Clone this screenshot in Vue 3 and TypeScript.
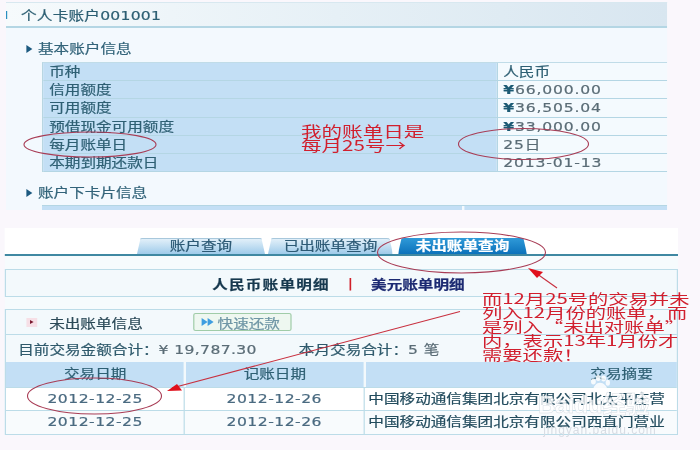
<script setup lang="ts">
interface InfoRow { label: string; value: string; yen?: boolean }
const info: InfoRow[] = [
  { label: '币种', value: '人民币' },
  { label: '信用额度', value: '66,000.00', yen: true },
  { label: '可用额度', value: '36,505.04', yen: true },
  { label: '预借现金可用额度', value: '33,000.00', yen: true },
  { label: '每月账单日', value: '25日' },
  { label: '本期到期还款日', value: '2013-01-13' },
]
const tabs: string[] = ['账户查询', '已出账单查询', '未出账单查询']
const trades: string[][] = [
  ['2012-12-25', '2012-12-26', '中国移动通信集团北京有限公司北太平庄营'],
  ['2012-12-25', '2012-12-26', '中国移动通信集团北京有限公司西直门营业'],
]
const noteLines: string[] = [
  '而12月25号的交易并未',
  '列入12月份的账单，而',
  '是列入“未出对账单”',
  '内，表示13年1月份才',
  '需要还款！',
]
</script>

<template>
  <div class="page">
    <div class="sheet">
      <section class="top">
        <header class="top-head"><i class="mark"></i><span>个人卡账户001001</span></header>
        <h3 class="sec first"><i class="tri"></i>基本账户信息</h3>
        <div class="info">
          <div v-for="r in info" :key="r.label" class="info-row">
            <div class="lab">{{ r.label }}</div>
            <div class="val" :class="{ cn: r.value === '人民币' }"><b v-if="r.yen" class="yen">¥</b>{{ r.value }}</div>
          </div>
        </div>
        <h3 class="sec second"><i class="tri"></i>账户下卡片信息</h3>
        <div class="stub"><div class="s1"></div><div class="s2"></div></div>
      </section>

      <section class="bottom">
        <nav class="tabs">
          <div v-for="(t, i) in tabs" :key="t" class="tab" :class="['t' + i, { on: i === 2 }]">{{ t }}</div>
        </nav>
        <div class="currency">
          <b class="cny">人民币账单明细</b><span class="bar">|</span><b class="usd">美元账单明细</b>
        </div>
        <div class="box">
          <div class="title-row">
            <i class="pin"><i></i></i>
            <span class="tt">未出账单信息</span>
            <span class="btn"><i class="ff"></i><i class="ff"></i><span>快速还款</span></span>
          </div>
          <div class="sum-row">
            <span class="s-a">目前交易金额合计：<em>¥ 19,787.30</em></span>
            <span class="s-b">本月交易合计：<em>5 笔</em></span>
          </div>
          <div class="grid head">
            <div>交易日期</div><div>记账日期</div><div class="h3">交易摘要</div>
          </div>
          <div v-for="(t, i) in trades" :key="i" class="grid body">
            <div class="d">{{ t[0] }}</div><div class="d">{{ t[1] }}</div><div class="m">{{ t[2] }}</div>
          </div>
        </div>
      </section>
    </div>

    <div class="wm">
      <svg width="24" height="18" viewBox="0 0 40 30">
        <g fill="#fff">
          <ellipse cx="9" cy="11" rx="4" ry="5"/><ellipse cx="17" cy="5" rx="4" ry="5"/>
          <ellipse cx="26" cy="6" rx="4" ry="5"/><ellipse cx="33" cy="13" rx="3.6" ry="5"/>
          <path d="M20 13c-6 0-11 6-11 11 0 5 6 4 11 4s12 1 12-4c0-5-6-11-12-11z"/>
        </g>
      </svg>
      <div class="wm-t">Baidu经验</div>
      <div class="wm-u">jingyan.baidu.com</div>
    </div>

    <svg class="ink" width="700" height="450" viewBox="0 0 700 450">
      <g fill="none" stroke="#a83c55" stroke-width="1.1">
        <ellipse cx="90" cy="144.5" rx="66" ry="12.5"/>
        <ellipse cx="523.5" cy="144" rx="65" ry="15.5"/>
        <ellipse cx="461.5" cy="252.5" rx="84" ry="20.5"/>
        <ellipse cx="94.5" cy="396" rx="67" ry="18"/>
      </g>
      <g stroke="#c8303f" stroke-width="1.1" fill="none">
        <path d="M460 311.500 L172 388"/>
        <path d="M557 288 L533 271"/>
      </g>
      <g fill="#e0101c">
        <path d="M167 391 L182 390.500 L177 384z"/>
        <path d="M528 268 L543 272 L537 278z"/>
      </g>
    </svg>

    <div class="note n1">
      <div>我的账单日是</div>
      <div>每月25号→</div>
    </div>
    <div class="note n2">
      <div v-for="l in noteLines" :key="l">{{ l }}</div>
    </div>
  </div>
</template>

<style>
html, body { margin: 0; background: #faf7fc; }
</style>

<style scoped>
.page {
  position: relative;
  width: 700px;
  height: 450px;
  overflow: hidden;
  background: #faf7fc;
  font-family: "DejaVu Sans", "Noto Sans CJK SC", sans-serif;
  color: #2c5a70;
  font-size: 13px;
  filter: blur(0.45px);
}
.sheet {
  width: 583.330px;
  height: 450px;
  transform: scaleX(1.2);
  transform-origin: 0 0;
  -webkit-text-stroke: 0.2px currentColor;
}
.top {
  margin: 2px 0 0 5px;
  width: 550.830px;
  height: 208px;
  background: #f3f9fe;
  border-top: 1px solid #d8e8f0;
  box-sizing: border-box;
  overflow: hidden;
}
.top-head {
  height: 23px;
  display: flex;
  align-items: center;
  background: linear-gradient(90deg, #f6fafc 0%, #e6f0f6 50%, #d8e6f0 100%);
  border-bottom: 2px solid #b4d6e4;
  color: #2d5f73;
}
.top-head span { margin-left: 11.500px; letter-spacing: 0.200px; }
.mark { width: 2px; height: 8px; background: #2a8fc0; margin-left: -1px; }
.sec {
  margin: 0;
  font-weight: 400;
  font-size: 13px;
  line-height: 16px;
  display: flex;
  align-items: center;
  color: #33647a;
}
.sec.first { margin-top: 13px; }
.sec.second { margin-top: 12.500px; }
.tri {
  width: 0;
  height: 0;
  margin: 0 5px 0 16.670px;
  border-left: 5.830px solid #1c5a80;
  border-top: 4.500px solid transparent;
  border-bottom: 4.500px solid transparent;
}
.info {
  margin: 5px 0 0 30px;
  border-top: 1px solid #c0dce8;
  border-left: 1px solid #b8d6e2;
}
.info-row {
  display: grid;
  grid-template-columns: 378.330px 1fr;
  height: 18.200px;
  box-sizing: border-box;
  border-bottom: 1px solid #b4d6e4;
  line-height: 17px;
}
.lab { background: #c3dff5; padding-left: 5px; color: #2f6074; }
.val {
  background: #f4fafe;
  border-left: 1px solid #b4d6e4;
  padding-left: 4px;
  color: #5a6c76;
  letter-spacing: 0.700px;
}
.val.cn { color: #2f6074; letter-spacing: 0; }
.yen { color: #1c5a74; font-weight: 700; }
.stub {
  display: grid;
  grid-template-columns: 350px 1fr;
  margin: 4.500px 0 0 30px;
  height: 10px;
  border-top: 1px solid #b4d6e4;
}
.s1, .s2 { background: #c3dff5; }
.s2 { border-left: 2px solid #f4fafe; }
.bottom {
  margin: 18px 0 0 4.170px;
  width: 560.830px;
  background: #f6fbfd;
}
.tabs {
  display: flex;
  height: 28px;
  box-sizing: border-box;
  padding: 10px 0 0 110px;
  background: #fff;
  border-bottom: 2px solid #3f88a2;
}
.tab {
  height: 16px;
  line-height: 15px;
  text-align: center;
  border-radius: 5px 5px 0 0;
  background: linear-gradient(180deg, #e6f2fa, #9fcbea);
  box-shadow: inset 0 1px 0 #a8c8dc;
  color: #2d5a75;
  clip-path: polygon(3px 0, calc(100% - 3px) 0, 100% 100%, 0 100%);
}
.t0 { width: 106.670px; margin-right: 2.500px; }
.t1 { width: 104.170px; margin-right: 4.170px; }
.t2 { width: 107.500px; }
.on {
  background: linear-gradient(180deg, #2f9ad8, #0c72bb);
  box-shadow: none;
  color: #fff;
  font-weight: 700;
}
.currency {
  margin: 13px 0 12px;
  height: 28px;
  box-sizing: border-box;
  border: 1px solid #bcdce8;
  background: #f3f9fc;
  display: flex;
  align-items: center;
  padding-left: 171.670px;
}
.cny { color: #16384e; font-weight: 700; letter-spacing: 1px; }
.bar { color: #d0202a; margin: 0 15px 0 15px; }
.usd { color: #1c2a72; font-weight: 700; }
.box { border: 1px solid #bcdce8; background: #f3f9fc; }
.title-row {
  height: 24px;
  display: flex;
  align-items: center;
  border-bottom: 1px solid #bcdce8;
  color: #2c4a58;
}
.pin {
  width: 9.170px;
  height: 9px;
  margin-left: 16.670px;
  background: #f6dfe6;
  display: flex;
  align-items: center;
  justify-content: center;
}
.pin i {
  border-left: 3.500px solid #7a1a30;
  border-top: 2.500px solid transparent;
  border-bottom: 2.500px solid transparent;
}
.tt { margin-left: 10px; }
.btn {
  margin-left: 41.670px;
  width: 82.500px;
  height: 18px;
  box-sizing: border-box;
  border: 1px solid #a0cca8;
  border-radius: 2px;
  background: #eef7f0;
  display: flex;
  align-items: center;
  padding-left: 6.670px;
  color: #6f96a6;
}
.ff {
  border-left: 5px solid #3f9ee0;
  border-top: 4px solid transparent;
  border-bottom: 4px solid transparent;
}
.btn span { margin-left: 3px; }
.sum-row {
  height: 27px;
  display: flex;
  align-items: center;
  padding-left: 10px;
  color: #2f5a6c;
  white-space: nowrap;
}
.sum-row em {
  font-style: normal;
  color: #5a6c76;
  letter-spacing: 0.300px;
}
.s-b { margin-left: 35px; }
.grid {
  display: grid;
  grid-template-columns: 148.330px 149.170px 1fr;
  text-align: center;
}
.head {
  height: 25px;
  line-height: 24px;
  background: #c3dff5;
  color: #2f6074;
}
.head > div + div { border-left: 2px solid #f3f9fc; }
.h3 { text-align: right; padding-right: 20px; }
.body {
  height: 23.300px;
  line-height: 22px;
  background: #fff;
  border-top: 1px solid #bcdce8;
  box-sizing: border-box;
}
.body + .body { background: #f8fbfd; }
.body > div + div { border-left: 1px solid #bcdce8; }
.d {
  letter-spacing: 0.400px;
  color: #4a6a80;
}
.m {
  text-align: left;
  padding-left: 3.330px;
  color: #234c5e;
  white-space: nowrap;
  overflow: hidden;
}
.wm {
  position: absolute;
  left: 538px;
  top: 375px;
  width: 124px;
  color: rgba(255, 255, 255, 0.8);
  text-align: center;
}
.wm svg { display: block; margin: 0 0 0 50px; opacity: 0.85; }
.wm-t {
  font: 700 24px/24px "Liberation Sans", "Noto Sans CJK SC", sans-serif;
  white-space: nowrap;
  letter-spacing: -0.500px;
  -webkit-text-stroke: 0.5px rgba(200, 208, 216, 0.7);
  text-align: left;
}
.wm-u {
  margin-top: 7px;
  font: 400 12px/12px "Liberation Sans", sans-serif;
  letter-spacing: 1px;
  white-space: nowrap;
  color: #d8dde4;
}
.ink { position: absolute; left: 0; top: 0; }
.note {
  position: absolute;
  color: #d11f2e;
  white-space: nowrap;
  transform-origin: 0 0;
  font-family: "Noto Sans CJK SC", "Liberation Sans", sans-serif;
}
.n1 {
  left: 301px;
  top: 124px;
  font-size: 15px;
  line-height: 14px;
  transform: scaleX(1.37);
}
.n2 {
  left: 482px;
  top: 291px;
  font-size: 14px;
  line-height: 14px;
  transform: scaleX(1.45);
}
</style>
